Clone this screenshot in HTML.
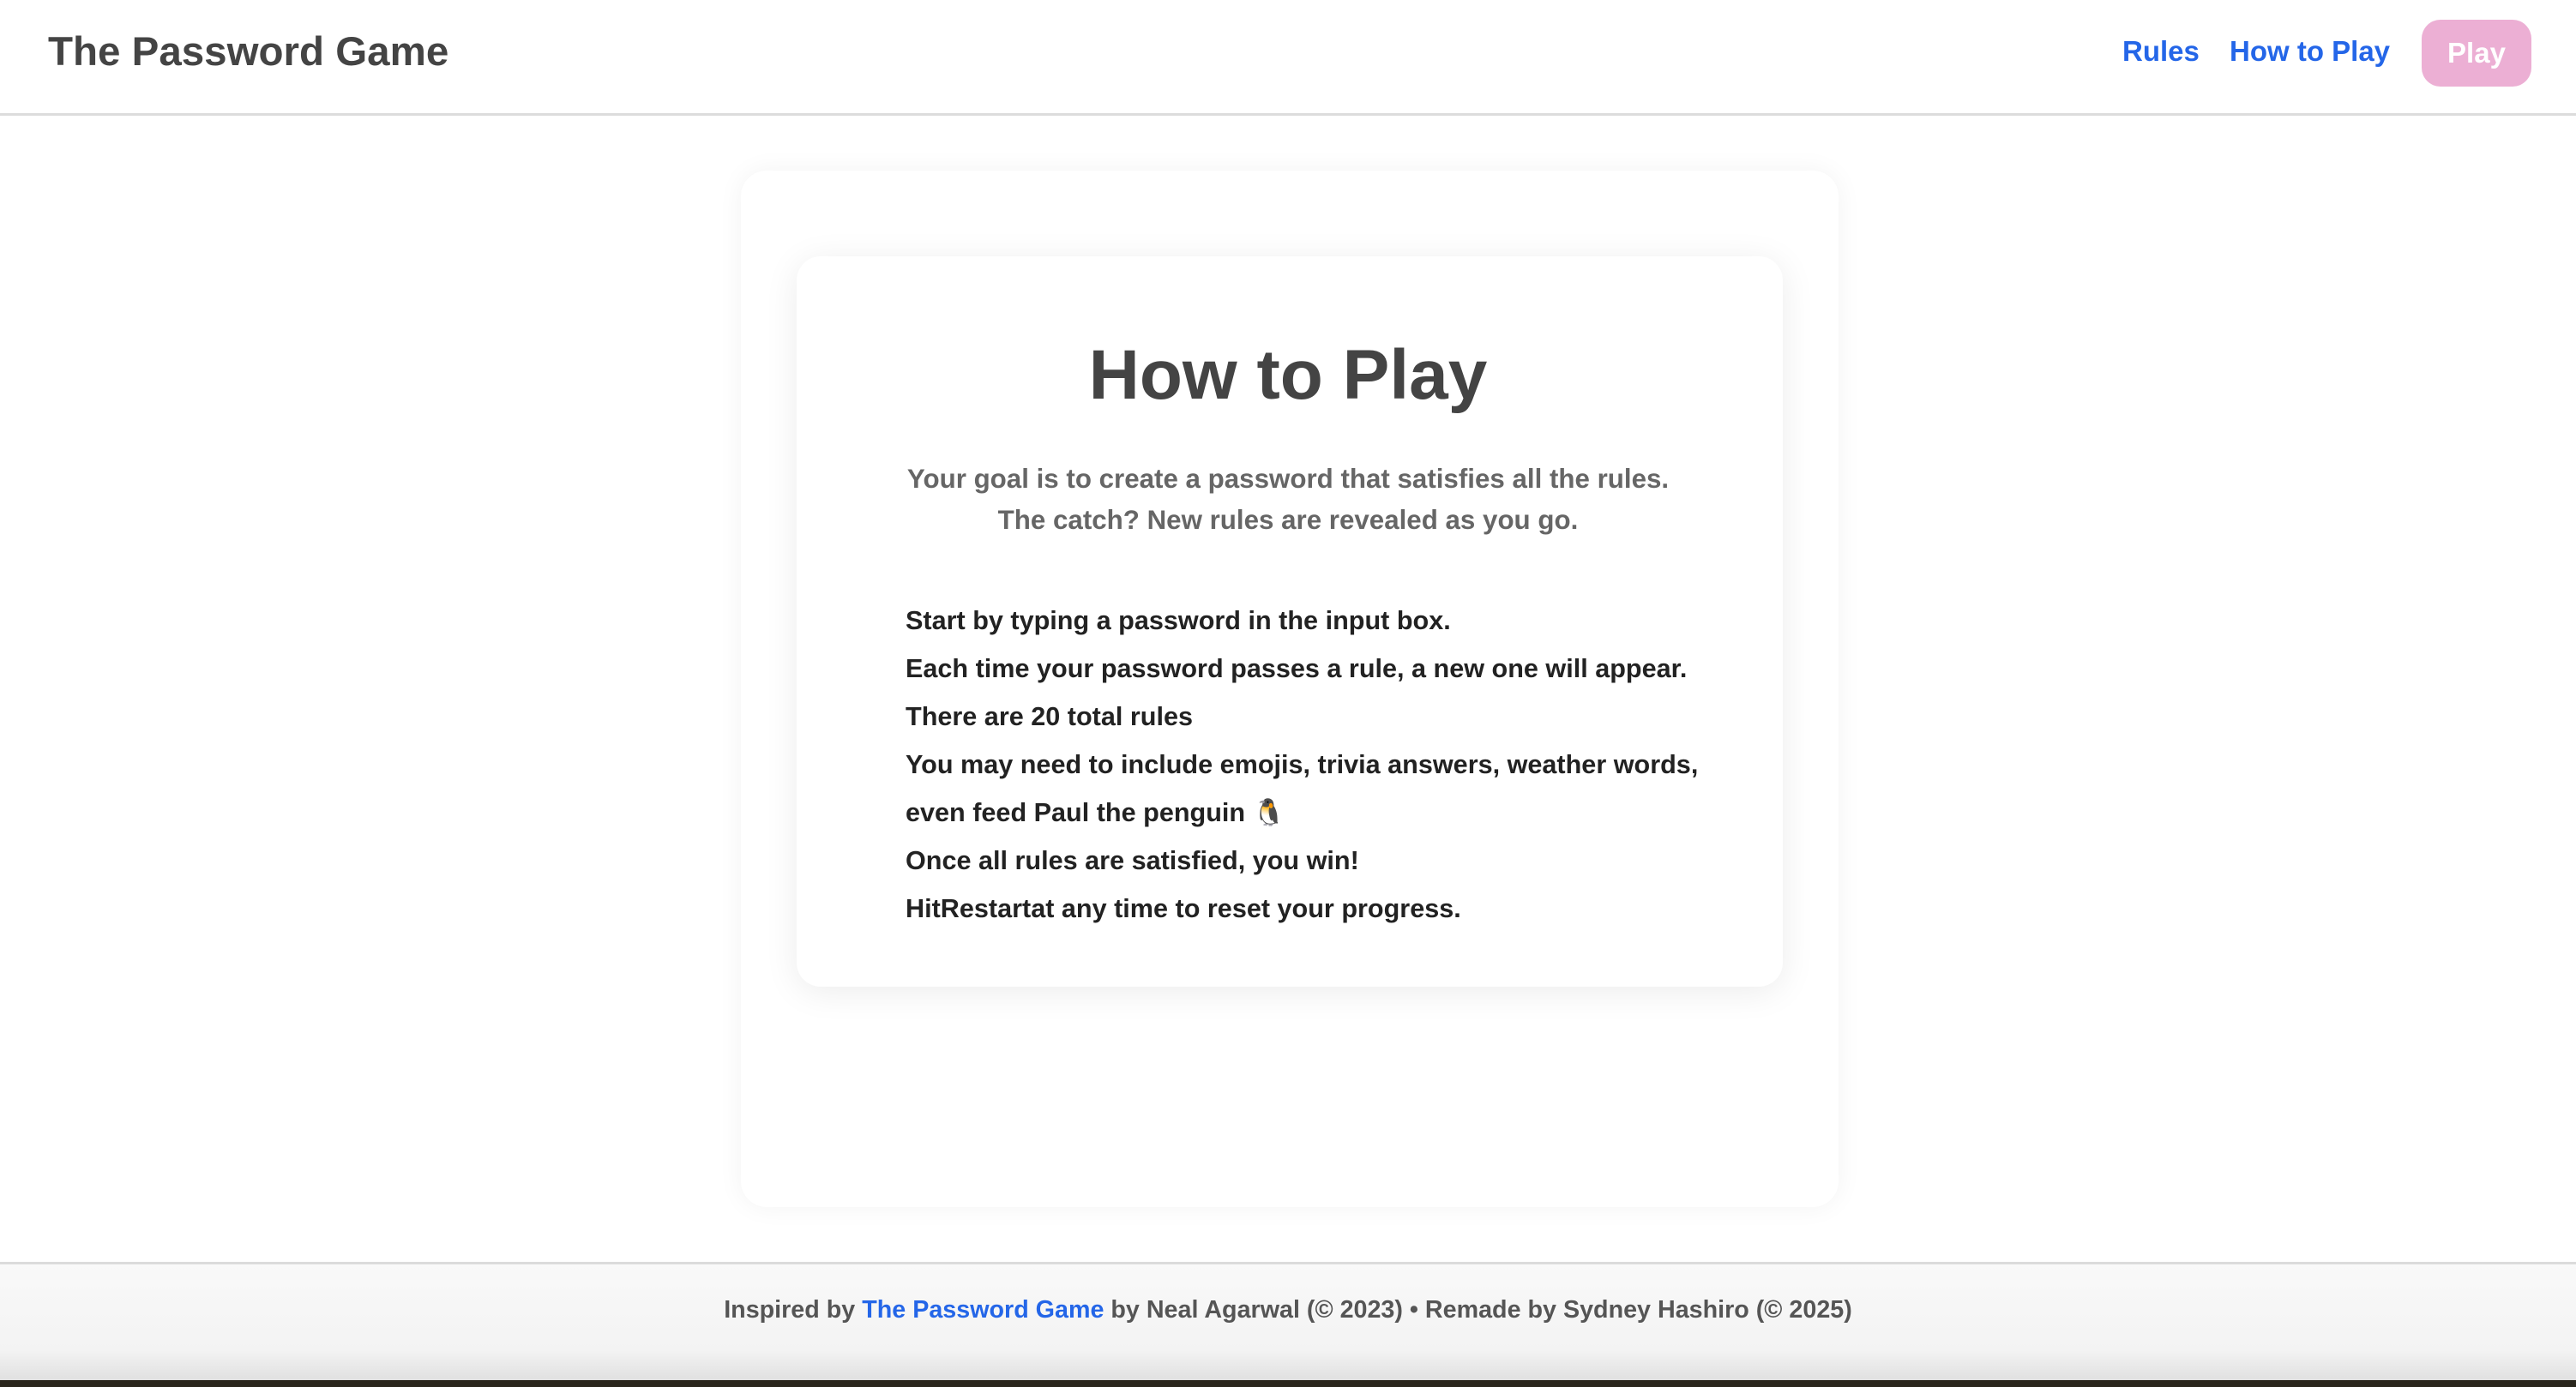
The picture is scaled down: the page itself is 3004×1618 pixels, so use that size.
<!DOCTYPE html>
<html><head><meta charset="utf-8"><style>
*{margin:0;padding:0;box-sizing:border-box}
html,body{width:3004px;height:1618px;overflow:hidden;background:#fff;font-family:"Liberation Sans",sans-serif}
.hdr{position:absolute;left:0;top:0;width:3004px;height:135px;border-bottom:3px solid #dcdcdc;background:#fff}
.logo{position:absolute;left:56px;top:34px;font-size:47.5px;font-weight:bold;color:#444;line-height:54px}
.nav{position:absolute;top:40px;font-size:33px;font-weight:bold;color:#2466e8;line-height:40px}
.play{position:absolute;left:2824px;top:23px;width:128px;height:78px;border-radius:22px;background:#ecafd4;color:#fff;font-size:33px;font-weight:bold;text-align:center;line-height:78px}
.outer{position:absolute;left:864px;top:199px;width:1280px;height:1209px;border-radius:30px;background:#fff;box-shadow:0 0 30px rgba(0,0,0,.05)}
.inner{position:absolute;left:929px;top:299px;width:1150px;height:852px;border-radius:28px;background:#fff;box-shadow:0 6px 40px rgba(0,0,0,.08)}
h1{position:absolute;left:0;width:100%;top:388px;text-align:center;font-size:82px;color:#444;line-height:100px}
.sub{position:absolute;left:0;width:100%;top:535px;text-align:center;font-size:31.3px;color:#666;line-height:48px;font-weight:bold}
.list{position:absolute;left:1056px;top:696px;font-size:30.6px;color:#222;line-height:56px;font-weight:bold}
.foot{position:absolute;left:0;top:1472px;width:3004px;height:146px;border-top:3px solid #dcdcdc;background:linear-gradient(#f9f9f9,#f3f3f3 70%,#dcdcdc);font-size:28.7px;color:#555;text-align:center;line-height:106px;font-weight:bold}
.foot a{color:#2466e8;text-decoration:none}
.bar{position:absolute;left:0;top:1610px;width:3004px;height:8px;background:#2a261c}
</style></head><body>
<div class="hdr">
<div class="logo">The Password Game</div>
<div class="nav" style="left:2475px">Rules</div>
<div class="nav" style="left:2600px">How to Play</div>
<div class="play">Play</div>
</div>
<div class="outer"></div>
<div class="inner"></div>
<h1>How to Play</h1>
<div class="sub">Your goal is to create a password that satisfies all the rules.<br>The catch? New rules are revealed as you go.</div>
<div class="list">
<div>Start by typing a password in the input box.</div>
<div>Each time your password passes a rule, a new one will appear.</div>
<div>There are 20 total rules</div>
<div>You may need to include emojis, trivia answers, weather words,</div>
<div>even feed Paul the penguin 🐧</div>
<div>Once all rules are satisfied, you win!</div>
<div>HitRestartat any time to reset your progress.</div>
</div>
<div class="foot">Inspired by <a>The Password Game</a> by Neal Agarwal (© 2023) • Remade by Sydney Hashiro (© 2025)</div>
<div class="bar"></div>
</body></html>
